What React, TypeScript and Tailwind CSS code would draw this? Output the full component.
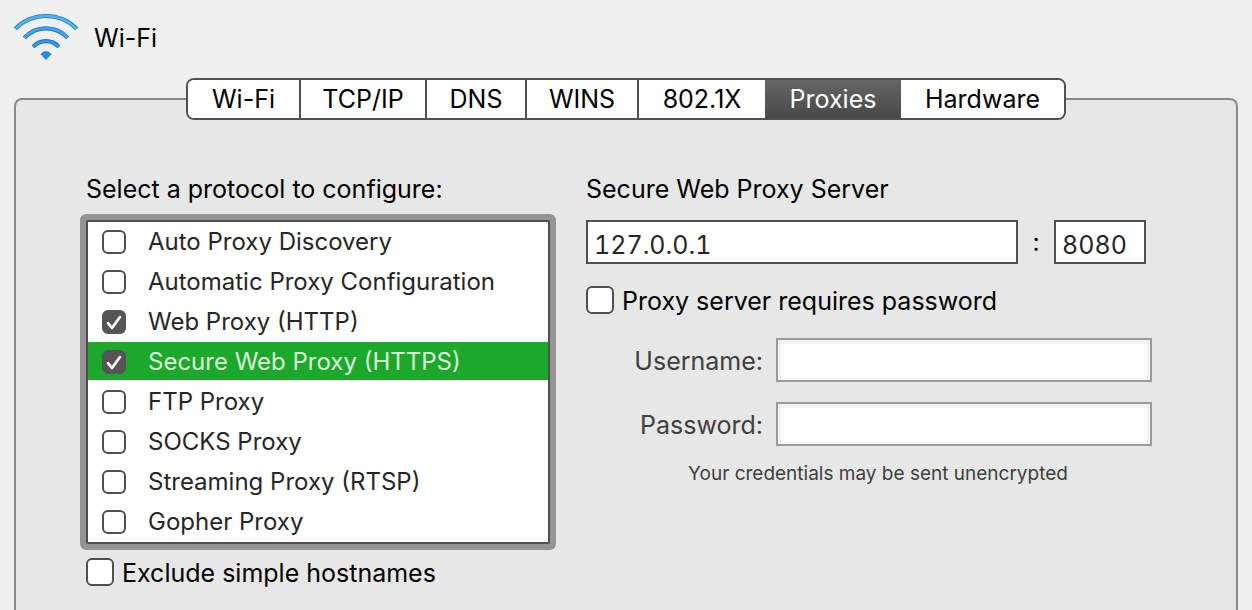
import { useState } from "react";

const tabs = [
  { name: "Wi-Fi", size: "w-[113px] border-r-2" },
  { name: "TCP/IP", size: "w-[126px] border-r-2" },
  { name: "DNS", size: "w-[100px] border-r-2" },
  { name: "WINS", size: "w-[112px] border-r-2" },
  { name: "802.1X", size: "w-[126px]" },
  { name: "Proxies", size: "w-[136px]" },
  { name: "Hardware", size: "w-[163px]" },
];

const initialProtocols = [
  { name: "Auto Proxy Discovery", on: false },
  { name: "Automatic Proxy Configuration", on: false },
  { name: "Web Proxy (HTTP)", on: true },
  { name: "Secure Web Proxy (HTTPS)", on: true },
  { name: "FTP Proxy", on: false },
  { name: "SOCKS Proxy", on: false },
  { name: "Streaming Proxy (RTSP)", on: false },
  { name: "Gopher Proxy", on: false },
];

function WifiIcon() {
  const arcs = [
    { d: "M1.3 14.8A43.2 43.2 0 0 1 62.7 14.8", color: "#4ab6f8" },
    { d: "M10.4 23.9A29.1 29.1 0 0 1 53.6 23.9", color: "#3fa6f8" },
    { d: "M19.2 32.8A17.4 17.4 0 0 1 44.8 32.8", color: "#3098f8" },
  ];
  return (
    <svg className="h-[46px] w-16 overflow-visible" viewBox="0 0 64 46" fill="none" aria-hidden="true">
      {arcs.map((arc) => (
        <g key={arc.d}>
          <path d={arc.d} stroke="#2470b0" strokeWidth="4.2" />
          <path d={arc.d} stroke={arc.color} strokeWidth="2.6" />
        </g>
      ))}
      <path d="M26.8 40Q32 35.2 37.2 40L32 45.6Z" fill="#208af8" stroke="#2a78c8" strokeWidth="0.7" />
    </svg>
  );
}

function ListCheckbox({ checked, onChange }: { checked: boolean; onChange: () => void }) {
  return (
    <span className="relative flex size-6 shrink-0">
      <input
        type="checkbox"
        checked={checked}
        onChange={onChange}
        className="size-6 appearance-none rounded-md border-2 border-[#505050] bg-white checked:bg-[#555555] checked:border-[#555555]"
      />
      {checked && (
        <svg className="pointer-events-none absolute inset-0 size-6" viewBox="0 0 24 24" fill="none" aria-hidden="true">
          <path d="M6 13.2L10 18L18 7" stroke="#ffffff" strokeWidth="2.6" strokeLinecap="round" strokeLinejoin="round" />
        </svg>
      )}
    </span>
  );
}

function LargeCheckbox({ label }: { label: string }) {
  return (
    <label className="flex h-8 items-center gap-2">
      <input type="checkbox" className="size-7 shrink-0 appearance-none rounded-md border-2 border-[#505050] bg-white checked:bg-[#555555]" />
      <span className="pt-0.5">{label}</span>
    </label>
  );
}

export default function App() {
  const [active, setActive] = useState("Proxies");
  const [selected, setSelected] = useState("Secure Web Proxy (HTTPS)");
  const [protocols, setProtocols] = useState(initialProtocols);

  const toggle = (name: string) => {
    setSelected(name);
    setProtocols(protocols.map((p) => (p.name === name ? { ...p, on: !p.on } : p)));
  };

  return (
    <div className="flex min-h-screen flex-col bg-[#efefef] px-3.5 font-[Inter,'Liberation_Sans',sans-serif] text-[25px] leading-8 text-black">
      <header className="flex items-center gap-4 pt-3.5">
        <WifiIcon />
        <h1 className="pt-0.5">Wi-Fi</h1>
      </header>

      <main className="mt-[38px] flex flex-1 flex-col rounded-t-lg border-2 border-b-0 border-[#8a8a8a] bg-[#e7e7e7]">
        <nav className="-mt-[22px] flex h-[42px] self-center overflow-hidden rounded-lg border-2 border-[#505050] bg-white">
          {tabs.map((tab) => (
            <button
              key={tab.name}
              type="button"
              onClick={() => setActive(tab.name)}
              className={`border-[#505050] ${tab.size} ${
                tab.name === active ? "bg-linear-to-b from-[#666666] to-[#484848] text-white" : "bg-white"
              }`}
            >
              {tab.name}
            </button>
          ))}
        </nav>

        <div className="flex gap-9 pt-[53px] pr-[84px] pl-[70px]">
          <section className="flex w-[464px] shrink-0 flex-col">
            <h2>Select a protocol to configure:</h2>
            <ul className="mt-[15px] rounded-xs border-2 border-[#505050] bg-white text-2xl text-[#262626] ring-6 ring-[#949494]">
              {protocols.map((p) => (
                <li key={p.name} className={`mb-0.5 h-[38px] ${p.name === selected ? "bg-[#1ca82b] text-[#dcf5dc]" : ""}`}>
                  <label className="flex h-10 items-center gap-[22px] pl-3.5">
                    <ListCheckbox checked={p.on} onChange={() => toggle(p.name)} />
                    {p.name}
                  </label>
                </li>
              ))}
            </ul>
            <div className="mt-3">
              <LargeCheckbox label="Exclude simple hostnames" />
            </div>
          </section>

          <section className="flex min-w-0 flex-1 flex-col">
            <h2>Secure Web Proxy Server</h2>
            <div className="mt-[15px] flex items-center pr-1.5">
              <input
                aria-label="Proxy host"
                defaultValue="127.0.0.1"
                className="h-11 min-w-0 flex-1 border-2 border-[#505050] bg-white px-1.5 pt-1.5 text-[#262626] tabular-nums"
              />
              <span className="w-9 text-center">:</span>
              <input
                aria-label="Proxy port"
                defaultValue="8080"
                className="h-11 w-[92px] border-2 border-[#505050] bg-white px-1.5 pt-1.5 text-[#262626] tabular-nums"
              />
            </div>
            <div className="mt-5">
              <LargeCheckbox label="Proxy server requires password" />
            </div>
            <div className="mt-[22px] grid grid-cols-[177px_1fr] items-center gap-x-[13px] gap-y-5 text-[#404040]">
              <label htmlFor="username" className="pt-0.5 text-right">
                Username:
              </label>
              <input id="username" className="h-11 w-full border-2 border-[#9b9b9b] bg-white px-1.5 inset-shadow-[0_1px_0_3px_#f3f3f3]" />
              <label htmlFor="password" className="pt-0.5 text-right">
                Password:
              </label>
              <input id="password" type="password" className="h-11 w-full border-2 border-[#9b9b9b] bg-white px-1.5 inset-shadow-[0_1px_0_3px_#f3f3f3]" />
            </div>
            <p className="mt-3 pl-[18px] text-center text-[19px] leading-8 text-[#404040]">Your credentials may be sent unencrypted</p>
          </section>
        </div>
      </main>
    </div>
  );
}
